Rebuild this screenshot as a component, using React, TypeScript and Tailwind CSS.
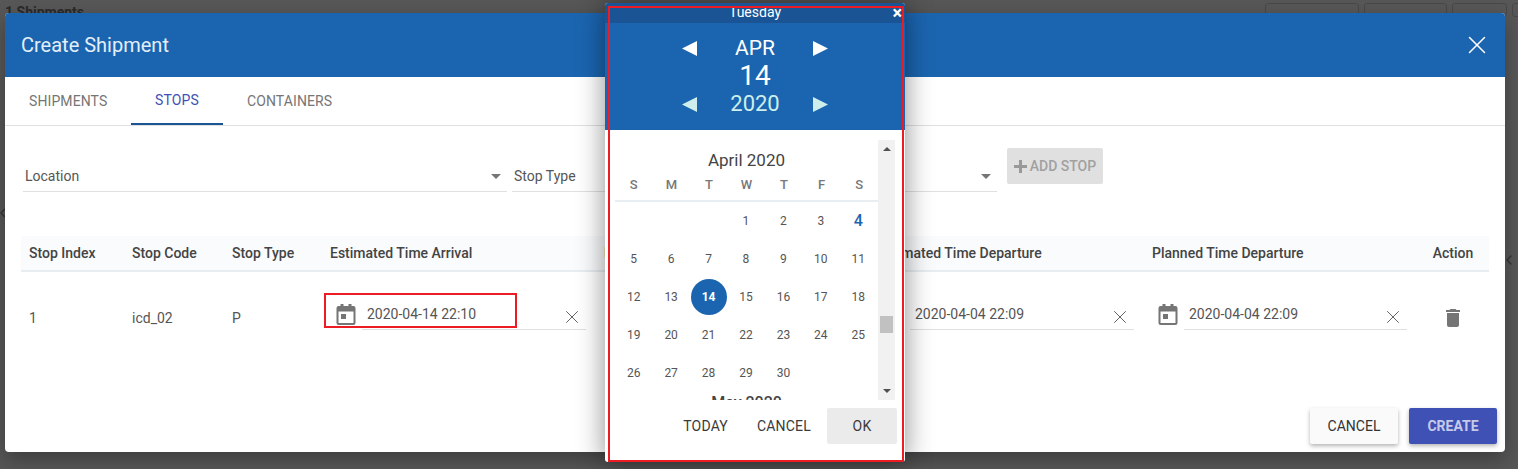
import { ChevronLeft, X } from 'lucide-react';

const headers = [
    'Stop Index',
    'Stop Code',
    'Stop Type',
    'Estimated Time Arrival',
    'Planned Time Arrival',
    'Estimated Time Departure',
    'Planned Time Departure',
];

const weeks = [
    ['', '', '', '1', '2', '3', '4'],
    ['5', '6', '7', '8', '9', '10', '11'],
    ['12', '13', '14', '15', '16', '17', '18'],
    ['19', '20', '21', '22', '23', '24', '25'],
    ['26', '27', '28', '29', '30', '', ''],
];

function Caret() {
    return <div className="w-0 h-0 border-x-[5px] border-x-transparent border-t-[5px] border-t-[#757575]" />;
}

function Triangle({ dir, color }: { dir: 'left' | 'right'; color: string }) {
    return (
        <svg width="15" height="15" viewBox="0 0 15 15" fill={color}>
            <path d={dir === 'left' ? 'M15 0V15L0 7.5Z' : 'M0 0V15L15 7.5Z'} />
        </svg>
    );
}

function CalendarIcon() {
    return (
        <svg width="20" height="21" viewBox="0 0 20 21" fill="#757575" className="shrink-0">
            <path d="M4.500 0h3v2h5V0h3v2h2A2 2 0 0 1 19.500 4v15a2 2 0 0 1-2 2h-15a2 2 0 0 1-2-2V4a2 2 0 0 1 2-2h2V0ZM2.500 7.500V19h15V7.500h-15ZM5 10h5v5H5v-5Z" />
        </svg>
    );
}

function DateCell({ value }: { value: string }) {
    return (
        <div className="flex items-center pl-[14px] pr-[10px]">
            <div className="w-[20px] mr-[6px] shrink-0 -mt-[2px]"><CalendarIcon /></div>
            <div className="flex-1 h-[30px] flex items-center justify-between border-b border-[#e0e0e0] pl-[5px] pr-[3px]">
                <span className="text-[14px] text-[#555]">{value}</span>
                <X size={22} strokeWidth={1} className="text-[#555] mt-[5px]" />
            </div>
        </div>
    );
}

function CalendarPopup() {
    return (
        <div className="absolute left-[605px] top-[3px] w-[300px] h-[459px] bg-white rounded-[3px] flex flex-col shadow-[0_0_28px_rgba(0,0,0,0.45)] overflow-hidden">
            <div className="h-[20px] pt-[1px] bg-[#1a5494] relative text-white text-[14px] leading-[16px] text-center shrink-0 overflow-hidden">
                <span className="block">Tuesday</span>
                <span className="absolute right-[3px] top-[3px] text-[18px] font-bold leading-[14px]">×</span>
            </div>
            <div className="h-[107px] bg-[#1b65b0] flex flex-col items-center pt-[14px] text-white shrink-0">
                <div className="h-[22px] w-[146px] flex items-center justify-between">
                    <Triangle dir="left" color="#fff" />
                    <span className="text-[21px] leading-none">APR</span>
                    <Triangle dir="right" color="#fff" />
                </div>
                <div className="text-[28px] leading-[32px] mt-[1px]">14</div>
                <div className="h-[24px] w-[146px] flex items-center justify-between text-[#cdeeec]">
                    <Triangle dir="left" color="#cdeeec" />
                    <span className="text-[22px] leading-none">2020</span>
                    <Triangle dir="right" color="#cdeeec" />
                </div>
            </div>
            <div className="mt-[10px] mx-[10px] h-[260px] flex overflow-hidden shrink-0">
                <div className="w-[263px] flex flex-col shrink-0">
                    <div className="text-[17px] leading-[20px] mt-[10px] text-center text-[#444] shrink-0">April 2020</div>
                    <div className="grid grid-cols-7 h-[32px] border-b-2 border-[#e8edf1] items-center shrink-0">
                        {['S', 'M', 'T', 'W', 'T', 'F', 'S'].map((d, i) => (
                            <span key={i} className="text-center text-[13px] font-medium text-[#777]">{d}</span>
                        ))}
                    </div>
                    {weeks.map((week, r) => (
                        <div key={r} className="grid grid-cols-7 h-[38px] items-center shrink-0 pr-[1px]">
                            {week.map((d, i) => (
                                <span key={i} className="flex justify-center text-[12px] text-[#555]">
                                    {d === '14' ? (
                                        <span className="w-[36px] h-[36px] rounded-full bg-[#1b65b0] text-white font-bold flex items-center justify-center">14</span>
                                    ) : d === '4' ? (
                                        <span className="text-[16px] font-medium text-[#1b65b0]">4</span>
                                    ) : d}
                                </span>
                            ))}
                        </div>
                    ))}
                    <div className="text-[16px] leading-[20px] mt-[1px] text-center font-medium text-[#444] shrink-0">May 2020</div>
                </div>
                <div className="w-[17px] bg-[#f1f1f1] flex flex-col items-center justify-between py-[7px] relative">
                    <div className="w-0 h-0 border-x-[4px] border-x-transparent border-b-[4px] border-b-[#505050]" />
                    <div className="absolute left-[2px] top-[176px] w-[13px] h-[17px] bg-[#c1c1c1]" />
                    <div className="w-0 h-0 border-x-[4px] border-x-transparent border-t-[4px] border-t-[#505050]" />
                </div>
            </div>
            <div className="flex justify-end items-center mt-[8px] pr-[8px] text-[14px] text-[#3a3a3a] tracking-[0.2px]">
                <span className="mr-[29px]">TODAY</span>
                <span className="mr-[16px]">CANCEL</span>
                <span className="w-[70px] h-[36px] rounded-[2px] bg-[#ebebeb] flex items-center justify-center">OK</span>
            </div>
        </div>
    );
}

export default function App() {
    return (
        <div className="relative w-[1518px] h-[469px] overflow-hidden bg-[#575757] font-['Roboto',sans-serif]">
            <div className="absolute left-[5px] top-[2px] text-[14px] font-bold text-[#2a2a2a]">1 Shipments</div>
            <div className="absolute left-[1265px] top-[3px] flex gap-[5px]">
                <div className="w-[94px] h-[14px] border border-[#484848] rounded-[3px]" />
                <div className="w-[83px] h-[14px] border border-[#484848] rounded-[3px]" />
                <div className="w-[55px] h-[14px] border border-[#484848] rounded-[3px]" />
                <div className="w-[20px] h-[14px] border border-[#484848] rounded-[3px]" />
            </div>
            <ChevronLeft size={16} className="absolute left-[-5px] top-[205px] text-[#333]" />
            <ChevronLeft size={16} className="absolute left-[1501px] top-[252px] text-[#333]" />

            <div className="absolute left-[5px] top-[13px] w-[1500px] h-[439px] bg-white rounded-[4px] shadow-[0_8px_20px_rgba(0,0,0,0.3)] flex flex-col overflow-hidden">
                <div className="h-[64px] bg-[#1b65b0] flex items-center justify-between pl-[16px] pr-[13px] shrink-0">
                    <span className="text-[20px] text-[#e3eef8]">Create Shipment</span>
                    <X size={30} strokeWidth={1.2} className="text-white" />
                </div>

                <div className="h-[49px] border-b border-[#e0e0e0] flex shrink-0">
                    <div className="w-[126px] h-[48px] flex items-center pl-[24px] text-[14px] tracking-[0.1px] text-[#757575]">SHIPMENTS</div>
                    <div className="w-[92px] h-[48px] flex items-center justify-center text-[14px] tracking-[0.1px] text-[#3f51b5] border-b-2 border-[#1a5494]">STOPS</div>
                    <div className="h-[48px] flex items-center pl-[24px] text-[14px] tracking-[0.1px] text-[#757575]">CONTAINERS</div>
                </div>

                <div className="h-[110px] pl-[18px] pt-[22px] flex items-start shrink-0">
                    <div className="w-[484px] h-[44px] border-b border-[#e0e0e0] flex items-center justify-between pl-[2px] pr-[6px] mr-[5px] pt-[14px] text-[14px] text-[#555]">
                        Location
                        <Caret />
                    </div>
                    <div className="w-[485px] h-[44px] border-b border-[#e0e0e0] flex items-center justify-between pl-[2px] pr-[6px] pt-[14px] text-[14px] text-[#555]">
                        Stop Type
                        <Caret />
                    </div>
                    <div className="ml-[10px] w-[96px] h-[36px] bg-[#e0e0e0] rounded-[2px] flex items-center justify-center gap-[3px] text-[#a0a0a0] font-medium">
                        <svg width="13" height="13" viewBox="0 0 13 13" fill="#999"><path d="M5 0h3v5h5v3H8v5H5V8H0V5h5Z" /></svg>
                        <span className="text-[14px]">ADD STOP</span>
                    </div>
                </div>

                <div className="mx-[16px] w-[1468px] grid grid-cols-[103px_100px_98px_274px_274px_274px_273px_72px] h-[36px] bg-[#f9fbfd] border-b-2 border-[#e8edf1] items-center text-[14px] font-medium text-[#444] shrink-0">
                    {headers.map(h => (
                        <div key={h} className="pl-[8px] whitespace-nowrap">{h}</div>
                    ))}
                    <div className="text-center">Action</div>
                </div>

                <div className="mx-[16px] w-[1468px] grid grid-cols-[103px_100px_98px_274px_274px_274px_273px_72px] h-[70px] items-center text-[14px] text-[#555] shrink-0 pt-[16px]">
                    <div className="pl-[8px] pt-[6px]">1</div>
                    <div className="pl-[8px] pt-[6px]">icd_02</div>
                    <div className="pl-[8px] pt-[6px]">P</div>
                    <DateCell value="2020-04-14 22:10" />
                    <DateCell value="2020-04-04 22:09" />
                    <DateCell value="2020-04-04 22:09" />
                    <DateCell value="2020-04-04 22:09" />
                    <div className="flex justify-center pt-[6px]">
                        <svg width="24" height="24" viewBox="0 0 24 24" fill="#757575">
                            <path d="M6 19c0 1.100.9 2 2 2h8c1.100 0 2-.9 2-2V7H6v12zM19 4h-3.500l-1-1h-5l-1 1H5v2h14V4z" />
                        </svg>
                    </div>
                </div>

                <div className="flex justify-end gap-[11px] pr-[8px] mt-[66px]">
                    <div className="w-[88px] h-[36px] bg-[#fafafa] rounded-[2px] shadow-[0_2px_4px_rgba(0,0,0,0.3)] flex items-center justify-center text-[14px] text-[#333]">CANCEL</div>
                    <div className="w-[88px] h-[36px] bg-[#3f51b5] rounded-[2px] shadow-[0_2px_4px_rgba(0,0,0,0.3)] flex items-center justify-center text-[14px] font-bold text-[#c5cae9]">CREATE</div>
                </div>
            </div>

            <div className="absolute left-[324px] top-[293px] w-[193px] h-[35px] border-2 border-[#ed1c24]" />
            <CalendarPopup />
            <div className="absolute left-[608px] top-[6px] w-[296px] h-[456px] border-2 border-[#ed1c24]" />
        </div>
    );
}
